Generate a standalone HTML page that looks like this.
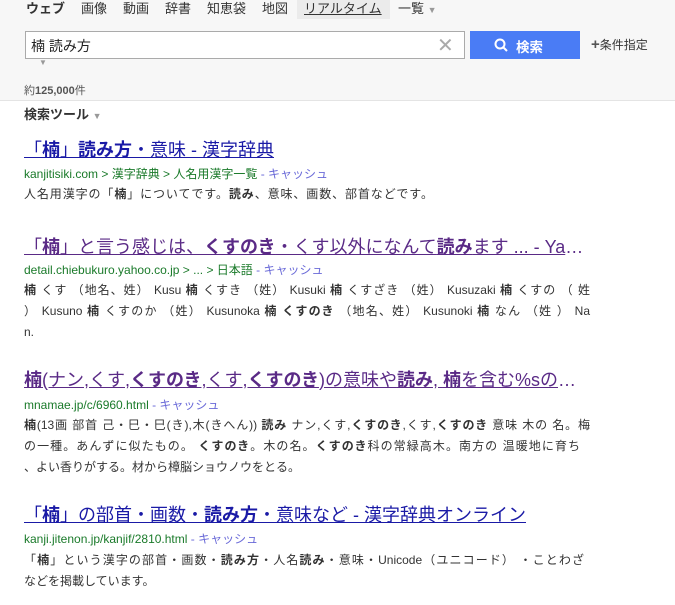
<!DOCTYPE html>
<html><head><meta charset="utf-8"><style>
*{margin:0;padding:0;box-sizing:border-box}
body{width:675px;height:605px;overflow:hidden;background:#fff;font-family:"Liberation Sans","Noto Sans CJK JP",sans-serif;color:#333;position:relative}
.hdr{position:absolute;left:0;top:0;width:675px;height:101px;background:#f7f7f7;border-bottom:1px solid #e4e4e4}
.a{position:absolute;white-space:nowrap}
.nav{font-size:13px;top:-2px;color:#333}
.t{font-size:18px;text-decoration:underline;color:#1a1aa6;left:24px}
.v{color:#5a2a86}
.u{font-size:12px;color:#1a7a2a;left:24px}
.u span{color:#6a6ad8}
.s{font-size:12px;color:#333;left:24px;line-height:21px}
.s div{height:21px;white-space:nowrap}
.s .j{width:566px;text-align:justify;text-align-last:justify}
b{font-weight:bold}
</style></head><body>
<div class="hdr"></div>
<div class="a" style="left:297px;top:0;width:93px;height:19px;background:#ebebeb"></div>
<div class="a nav" style="left:26px;font-weight:bold">ウェブ</div>
<div class="a nav" style="left:81px">画像</div>
<div class="a nav" style="left:123px">動画</div>
<div class="a nav" style="left:165px">辞書</div>
<div class="a nav" style="left:207px">知恵袋</div>
<div class="a nav" style="left:262px">地図</div>
<div class="a nav" style="left:304px;text-decoration:underline">リアルタイム</div>
<div class="a nav" style="left:398px">一覧 <span style="color:#999;font-size:9px">▼</span></div>
<div class="a" style="left:25px;top:31px;width:440px;height:28px;background:#fff;border:1px solid #aaa"></div>
<div class="a" style="left:31px;top:36px;font-size:14px;color:#222">楠 読み方</div>
<div class="a" style="left:437px;top:33px;font-size:20px;color:#aaa">✕</div>
<div class="a" style="left:470px;top:31px;width:110px;height:28px;background:#4a7cf5"></div>
<svg class="a" style="left:494px;top:38px" width="14" height="14"><circle cx="6" cy="6" r="4.5" fill="none" stroke="#fff" stroke-width="2"/><line x1="9.5" y1="9.5" x2="13" y2="13" stroke="#fff" stroke-width="2"/></svg>
<div class="a" style="left:516px;top:36px;font-size:13.5px;color:#fff;font-weight:bold">検索</div>
<div class="a" style="left:591px;top:36px;font-size:12px;color:#333"><b style="font-size:15px;color:#555">+</b>条件指定</div>
<div class="a" style="left:39px;top:58px;font-size:8px;color:#999">▼</div>
<div class="a" style="left:24px;top:82px;font-size:11px;color:#555">約<b>125,000</b>件</div>
<div class="a" style="left:24px;top:104px;font-size:13px;font-weight:bold;color:#333">検索ツール <span style="color:#999;font-size:9px">▼</span></div>

<div class="a t" style="top:136px">「<b>楠</b>」<b>読み方</b>・意味 - 漢字辞典</div>
<div class="a u" style="top:165px">kanjitisiki.com &gt; 漢字辞典 &gt; 人名用漢字一覧 <span>- キャッシュ</span></div>
<div class="a s" style="top:184px"><div style="width:409px;text-align:justify;text-align-last:justify">人名用漢字の「<b>楠</b>」についてです。<b>読み</b>、意味、画数、部首などです。</div></div>

<div class="a t v" style="top:233px;width:566px;overflow:hidden;text-overflow:ellipsis">「<b>楠</b>」と言う感じは、<b>くすのき</b>・くす以外になんて<b>読み</b>ます ... - Yahoo!知恵袋</div>
<div class="a u" style="top:261px">detail.chiebukuro.yahoo.co.jp &gt; ... &gt; 日本語 <span>- キャッシュ</span></div>
<div class="a s" style="top:280px"><div class="j"><b>楠</b> くす （地名、姓） Kusu <b>楠</b> くすき （姓） Kusuki <b>楠</b> くすざき （姓） Kusuzaki <b>楠</b> くすの （ 姓</div><div class="j">） Kusuno <b>楠</b> くすのか （姓） Kusunoka <b>楠</b> <b>くすのき</b> （地名、姓） Kusunoki <b>楠</b> なん （姓 ） Na</div><div>n.</div></div>

<div class="a t v" style="top:366px;width:566px;overflow:hidden;text-overflow:ellipsis"><b>楠</b>(ナン,くす,<b>くすのき</b>,くす,<b>くすのき</b>)の意味や<b>読み</b>, <b>楠</b>を含む%sの名前の一覧</div>
<div class="a u" style="top:396px">mnamae.jp/c/6960.html <span>- キャッシュ</span></div>
<div class="a s" style="top:415px"><div class="j"><b>楠</b>(13画 部首 己・巳・巳(き),木(きへん)) <b>読み</b> ナン,くす,<b>くすのき</b>,くす,<b>くすのき</b> 意味 木の 名。梅</div><div style="width:556px;text-align:justify;text-align-last:justify">の一種。あんずに似たもの。 <b>くすのき</b>。木の名。<b>くすのき</b>科の常緑高木。南方の 温暖地に育ち</div><div>、よい香りがする。材から樟脳ショウノウをとる。</div></div>

<div class="a t" style="top:501px">「<b>楠</b>」の部首・画数・<b>読み方</b>・意味など - 漢字辞典オンライン</div>
<div class="a u" style="top:530px">kanji.jitenon.jp/kanjif/2810.html <span>- キャッシュ</span></div>
<div class="a s" style="top:550px"><div style="width:560px;text-align:justify;text-align-last:justify">「<b>楠</b>」という漢字の部首・画数・<b>読み方</b>・人名<b>読み</b>・意味・Unicode（ユニコード） ・ことわざ</div><div>などを掲載しています。</div></div>
</body></html>
